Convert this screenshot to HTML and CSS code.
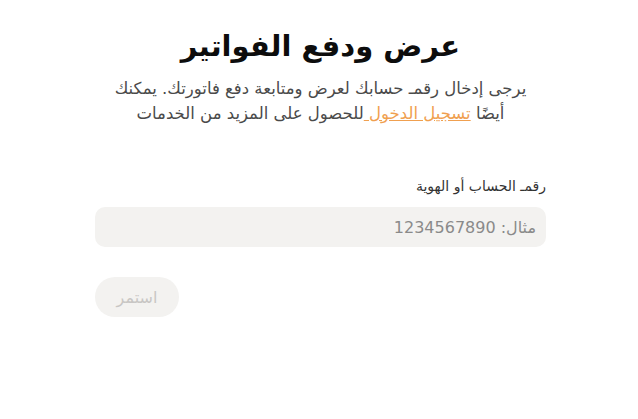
FILE: index.html
```html
<!DOCTYPE html>
<html lang="ar" dir="rtl">
<head>
<meta charset="utf-8">
<link rel="stylesheet" href="styles.css">
</head>
<body>
<main class="page">
  <h1 class="title">عرض ودفع الفواتير</h1>
  <p class="intro">يرجى إدخال رقمـ حسابك لعرض ومتابعة دفع فاتورتك. يمكنك<br>أيضًا <a href="#" class="link">تسجيل الدخول </a>للحصول على المزيد من الخدمات</p>
  <form class="form">
    <label class="label" for="acc">رقمـ الحساب أو الهوية</label>
    <input class="input" id="acc" type="text" placeholder="مثال: 1234567890">
    <div class="actions">
      <button class="btn" type="button" disabled>استمر</button>
    </div>
  </form>
</main>
</body>
</html>
```

FILE: styles.css
```css
html, body {
  margin: 0;
  padding: 0;
  background: #ffffff;
}
body {
  font-family: "DejaVu Sans", "Noto Sans", sans-serif;
  color: #111;
}
.page {
  padding: 24px 92px 0 95px;
  display: flex;
  flex-direction: column;
}
.title {
  margin: 0;
  text-align: center;
  font-size: 29px;
  font-weight: 700;
  line-height: 44px;
  color: #0d0d0d;
}
.intro {
  margin: 8px 0 0;
  text-align: center;
  font-size: 16.5px;
  line-height: 25px;
  color: #4a4a4a;
}
.link {
  color: #f0a050;
  text-decoration: underline;
}
.form {
  margin-top: 50px;
  display: flex;
  flex-direction: column;
}
.label {
  font-size: 14px;
  line-height: 20px;
  color: #333;
}
.input {
  margin-top: 11px;
  box-sizing: border-box;
  width: 100%;
  height: 40px;
  border: none;
  border-radius: 10px;
  background: #f3f2f0;
  padding: 0 10px;
  font-family: "DejaVu Sans", sans-serif;
  font-size: 16px;
  color: #333;
  outline: none;
}
.input::placeholder {
  color: #8a8a8a;
}
.actions {
  margin-top: 30px;
  display: flex;
  justify-content: flex-end;
}
.btn {
  width: 84px;
  height: 40px;
  border: none;
  border-radius: 20px;
  background: #f3f2f0;
  color: #c8c6c4;
  font-family: "DejaVu Sans", sans-serif;
  font-size: 16px;
}
```
